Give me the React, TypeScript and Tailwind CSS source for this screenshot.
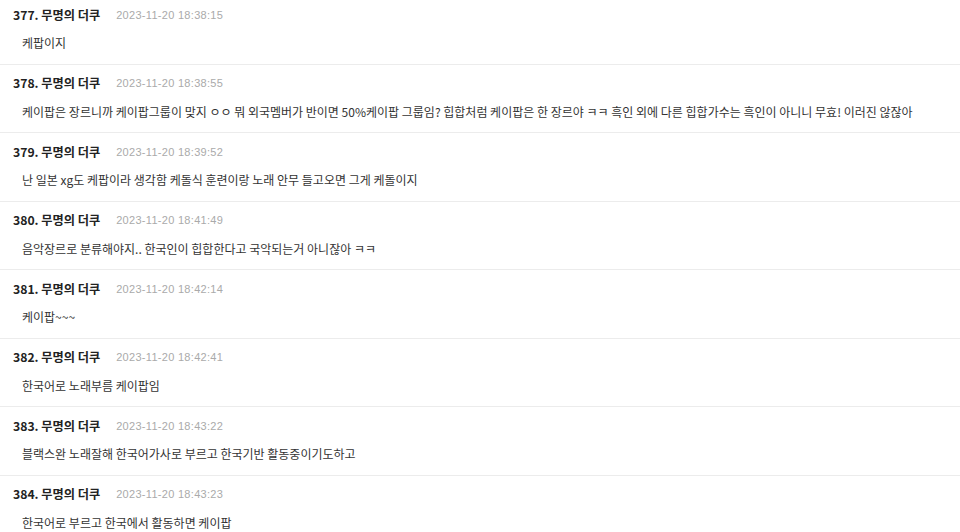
import { JSX } from 'react'

type Comment = { no: number; time: string; body: string }

const comments: Comment[] = [
  { no: 377, time: '2023-11-20 18:38:15', body: '케팝이지' },
  { no: 378, time: '2023-11-20 18:38:55', body: '케이팝은 장르니까 케이팝그룹이 맞지 ㅇㅇ 뭐 외국멤버가 반이면 50%케이팝 그룹임? 힙합처럼 케이팝은 한 장르야 ㅋㅋ 흑인 외에 다른 힙합가수는 흑인이 아니니 무효! 이러진 않잖아' },
  { no: 379, time: '2023-11-20 18:39:52', body: '난 일본 xg도 케팝이라 생각함 케돌식 훈련이랑 노래 안무 들고오면 그게 케돌이지' },
  { no: 380, time: '2023-11-20 18:41:49', body: '음악장르로 분류해야지.. 한국인이 힙합한다고 국악되는거 아니잖아 ㅋㅋ' },
  { no: 381, time: '2023-11-20 18:42:14', body: '케이팝~~~' },
  { no: 382, time: '2023-11-20 18:42:41', body: '한국어로 노래부름 케이팝임' },
  { no: 383, time: '2023-11-20 18:43:22', body: '블랙스완 노래잘해 한국어가사로 부르고 한국기반 활동중이기도하고' },
  { no: 384, time: '2023-11-20 18:43:23', body: '한국어로 부르고 한국에서 활동하면 케이팝' },
]

const CommentRow = ({ comment, first }: { comment: Comment; first: boolean }): JSX.Element => (
  <li className={`border-b border-[#ececec] pb-[12.5px] ${first ? 'pt-[7px]' : 'pt-[11px]'}`}>
    <div className="flex h-4 items-center pl-[13px]">
      <span className="text-[12.2px] font-bold text-[#222]">{comment.no}. 무명의 더쿠</span>
      <span className="ml-[16px] font-['Liberation_Sans',sans-serif] text-[11px] tracking-[0.3px] text-[#aaa]">{comment.time}</span>
    </div>
    <p className="mt-3 h-4 whitespace-nowrap pl-[22px] text-[12px] leading-4 text-[#333]">{comment.body}</p>
  </li>
)

export default function App(): JSX.Element {
  return (
    <div className="h-[532px] w-[960px] overflow-hidden bg-white font-['Noto_Sans_CJK_KR','Noto_Sans',sans-serif]">
      <ul>
        {comments.map((comment, index) => (
          <CommentRow key={comment.no} comment={comment} first={index === 0} />
        ))}
      </ul>
    </div>
  )
}
